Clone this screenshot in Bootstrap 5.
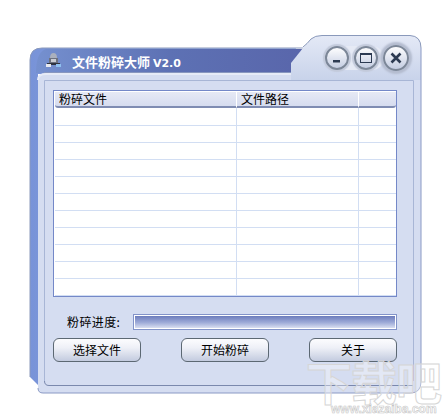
<!DOCTYPE html>
<html lang="zh-CN">
<head>
<meta charset="UTF-8">
<title>文件粉碎大师 V2.0</title>
<link href="https://cdn.jsdelivr.net/npm/bootstrap@5.3.0/dist/css/bootstrap.min.css" rel="stylesheet">
<style>
    html, body { margin: 0; background: #fff; overflow: hidden; }
    body { font-family: "Noto Sans CJK SC", "Liberation Sans", sans-serif; font-size: 12px; color: #000; }
    .app-window { position: relative; width: 446px; height: 418px; padding-top: 44px; overflow: hidden; }
    .chrome-bg { position: absolute; left: 0; top: 0; }
    .title-row { position: relative; height: 28px; padding-left: 46px; padding-right: 37px; }
    .app-icon { margin-top: 8px; }
    .app-title { margin: 9px 0 0 11px; font-size: 13px; line-height: 18px; font-weight: 700; color: #fff; }
    .app-title span { font-family: "DejaVu Sans", sans-serif; font-size: 11px; }
    .win-btns { margin-top: 2px; }
    .win-btn { width: 24px; height: 24px; margin-left: 5px; border-radius: 50%; background: linear-gradient(#fdfdfe, #c4cde2); border: 2px solid #7c8798; box-shadow: 0 0 1px 2px #c3cadb; }
    .win-btn.is-close { width: 26px; height: 26px; margin-top: -1px; box-shadow: 0 0 2px 3px #b4bccf; }
    .win-btn svg { display: block; margin: 1px; }
    .list-box { position: relative; margin: 18px 0 0 53px; width: 344px; height: 207px; padding: 1px 0 0 1px; background: #fff; border: 1px solid #7488c8; overflow: hidden; }
    .file-table { width: 341px; table-layout: fixed; margin: 0; border-collapse: separate; border-spacing: 0; }
    .file-table th { height: 16px; padding: 0 0 0 4px; font-weight: 400; font-size: 12px; line-height: 14px; background: linear-gradient(#e6e9f5, #d6dcef); border-bottom: 2px solid #7f8cb2; border-right: 1px solid #fff; }
    .file-table th:first-child { border-radius: 0 0 0 3px; }
    .file-table th:last-child { border-radius: 0 0 3px 0; border-right: 0; }
    .file-table td { height: 17px; padding: 0; background: #fff; border-bottom: 1px solid #d2def3; border-right: 1px solid #d2def3; }
    .file-table tr:first-child td { height: 18px; }
    .file-table td:last-child { border-right: 0; }
    .progress-row { position: relative; margin: 17px 0 0 67px; width: 330px; height: 16px; }
    .progress-label { width: 66px; font-size: 12px; line-height: 16px; letter-spacing: .4px; }
    .progress-track { flex: 1; border: 1px solid #8293c9; background: #fff; padding: 1px; }
    .progress-track div { height: 100%; background: linear-gradient(#6c7cbc, #9eabd8 55%, #d8def0); }
    .btn-row { position: relative; margin: 8px 0 0 53px; width: 344px; }
    .btn-row .btn { width: 88px; height: 24px; padding: 0; font-size: 12px; line-height: 20px; color: #000; background: linear-gradient(#fcfcfe, #eef0f7 40%, #c3cbdf); border: 1px solid #5c6873; border-radius: 6px; }
    .wm-cn { position: absolute; left: 306px; top: 358px; font-size: 46px; line-height: 44px; font-weight: 700; letter-spacing: -1px; color: rgba(255,255,255,.35); -webkit-text-stroke: 1px #d6d6d6; }
    .wm-en { position: absolute; left: 331px; top: 403px; font-family: "Liberation Sans", sans-serif; font-size: 12px; line-height: 13px; font-weight: 700; color: #fff; -webkit-text-stroke: .6px #c6c6c6; }
</style>
</head>
<body>
<div class="app-window">
    <svg class="chrome-bg" width="446" height="418" viewBox="0 0 446 418">
        <defs>
            <linearGradient id="titleFill" x1="0" x2="1" y1="0" y2="0">
                <stop offset="0" stop-color="#7590cf"/>
                <stop offset=".5" stop-color="#5d71b4"/>
                <stop offset="1" stop-color="#5966ab"/>
            </linearGradient>
            <linearGradient id="earFill" x1="0" x2="0" y1="0" y2="1">
                <stop offset="0" stop-color="#e4e9f6"/>
                <stop offset="1" stop-color="#c8d3ea"/>
            </linearGradient>
            <linearGradient id="stripFill" x1="0" x2="1" y1="0" y2="0">
                <stop offset="0" stop-color="#7893d8"/>
                <stop offset="1" stop-color="#a3b6e6"/>
            </linearGradient>
        </defs>
        <!-- left strip and title bar -->
        <path d="M30 60 Q30 48 42 48 L296 48 L291 74 L38 74 L38 385 L30 377 Z" fill="url(#stripFill)"/>
        <path d="M36 73 Q36 52 46 49 L303 49 L291 72 Z" fill="url(#titleFill)"/>
        <path d="M30 377 L30 60 Q30 48 42 48 L303 48" fill="none" stroke="#8a99bb"/>
        <!-- right ear -->
        <path d="M291 73 L291 63 L303 48 L311 39 Q315 35.500 322 35.500 L410 35.500 Q421 36 421 48 L421 80 L291 80 Z" fill="url(#earFill)"/>
        <path d="M303 47 Q307 44 311 39 Q315 35.500 322 35.500 L410 35.500 Q421 36 421 48" fill="none" stroke="#8a99bb"/>
        <!-- panel -->
        <path d="M38 80 Q38 73 46 73 L291 73 L291 80 L421 80 L421 382 Q421 393 410 393 L43 393 Q38 393 38 388 Z" fill="#d5ddf1"/>
        <path d="M38 80 Q38 74 46 74 L291 74" fill="none" stroke="#e6ebf7" stroke-width="2"/>
        <path d="M291 72.500 L44 72.500" fill="none" stroke="#8897bf"/>
        <path d="M44.500 381 L44.500 80.500 L413.500 80.500 L413.500 381" fill="none" stroke="#a8b6d6"/>
        <path d="M44.500 381 Q44.500 385.500 49 385.500 L413 385.500" fill="none" stroke="#7a88ad"/>
        <path d="M38 388 Q38 393 43 393 L410 393 Q421 393 421 382 L421 48" fill="none" stroke="#8a99c4"/>
        <!-- band behind window buttons -->
        <rect x="334" y="46" width="50" height="24" rx="12" fill="#e6eaf5"/>
    </svg>

    <div class="title-row d-flex justify-content-between">
        <div class="d-flex">
            <svg class="app-icon" width="15" height="16" viewBox="0 0 15 16">
                <path d="M4 6 Q4 1 7.500 1 Q11 1 11 6 Z" fill="#aab0bd"/>
                <rect x="3" y="6" width="9" height="5" fill="#6d7280"/>
                <rect x="5" y="7" width="5" height="3" fill="#c9ccd4"/>
                <rect x="1" y="11" width="13" height="2" fill="#2f3340"/>
                <rect x="0" y="12" width="5" height="3" fill="#e8eaf0"/>
                <rect x="10" y="12" width="5" height="3" fill="#8fc0f0"/>
            </svg>
            <div class="app-title">文件粉碎大师 <span>V2.0</span></div>
        </div>
        <div class="win-btns d-flex align-items-start">
            <div class="win-btn">
                <svg width="18" height="18" viewBox="0 0 18 18"><rect x="5" y="11" width="7" height="2.500" fill="#2c3a52"/></svg>
            </div>
            <div class="win-btn">
                <svg width="18" height="18" viewBox="0 0 18 18"><rect x="3.500" y="4.500" width="11" height="9" fill="none" stroke="#2c3a52"/><rect x="3" y="4" width="12" height="2" fill="#2c3a52"/></svg>
            </div>
            <div class="win-btn is-close">
                <svg width="20" height="20" viewBox="0 0 20 20"><path d="M5.500 5.500 L14.500 14.500 M14.500 5.500 L5.500 14.500" stroke="#2c3a52" stroke-width="2.600"/></svg>
            </div>
        </div>
    </div>

    <div class="list-box">
        <table class="file-table">
            <colgroup><col style="width:182px"><col style="width:122px"><col></colgroup>
            <thead><tr><th>粉碎文件</th><th>文件路径</th><th></th></tr></thead>
            <tbody id="fileRows"></tbody>
        </table>
    </div>

    <div class="progress-row d-flex">
        <div class="progress-label">粉碎进度:</div>
        <div class="progress-track"><div></div></div>
    </div>

    <div class="btn-row d-flex justify-content-between">
        <button type="button" class="btn">选择文件</button>
        <button type="button" class="btn">开始粉碎</button>
        <button type="button" class="btn">关于</button>
    </div>

    <div class="wm-cn">下载吧</div>
    <div class="wm-en">www.xiazaiba.com</div>
</div>

<script src="https://cdn.jsdelivr.net/npm/bootstrap@5.3.0/dist/js/bootstrap.bundle.min.js"></script>
<script>
    // empty rows of the file list
    const fileRows = document.getElementById('fileRows');
    for (let i = 0; i < 11; i++) {
        const tr = document.createElement('tr');
        tr.innerHTML = '<td></td><td></td><td></td>';
        fileRows.appendChild(tr);
    }
</script>
</body>
</html>
